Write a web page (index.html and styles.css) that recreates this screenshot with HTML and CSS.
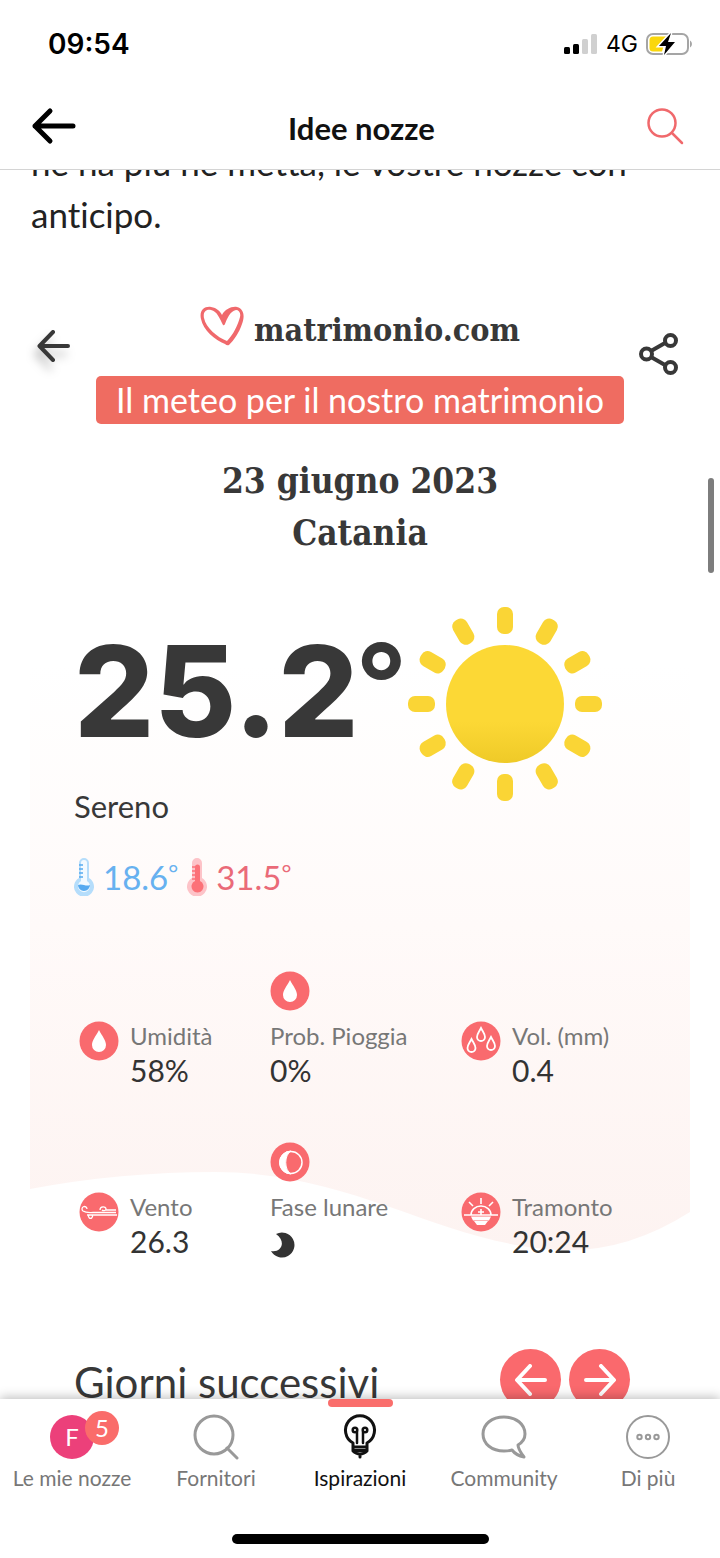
FILE: index.html
```html
<!DOCTYPE html>
<html lang="it">
<head>
    <meta charset="UTF-8">
    <meta name="viewport" content="width=device-width, initial-scale=1.0">
    <title>Idee nozze</title>
    <link rel="stylesheet" href="styles.css">
</head>
<body>
    <div class="app">
        <div class="status-bar">
            <span class="time">09:54</span>
            <div class="status-icons">
                <svg width="34" height="20" viewBox="0 0 34 20">
                    <rect x="0" y="13" width="6" height="7" rx="1.5" fill="#000"/>
                    <rect x="9" y="10" width="6" height="10" rx="1.5" fill="#000"/>
                    <rect x="18" y="5" width="6" height="15" rx="1.5" fill="#d0d0d0"/>
                    <rect x="27" y="0" width="6" height="20" rx="1.5" fill="#d0d0d0"/>
                </svg>
                <span class="network">4G</span>
                <svg width="46" height="24" viewBox="0 0 46 24">
                    <rect x="1" y="2" width="41" height="20" rx="6" fill="#fff" stroke="#a5a5a5" stroke-width="2"/>
                    <path d="M7 4.500h13l-5 8h3l-2 7H7a3.500 3.500 0 0 1-3.500-3.500V8A3.500 3.500 0 0 1 7 4.500z" fill="#fad70c"/>
                    <path d="M44 8.500c2.600 1.500 2.600 5.500 0 7z" fill="#a5a5a5"/>
                    <path d="M25 1 13 14h7l-2 9 11-13h-7z" fill="#000" stroke="#fff" stroke-width="3" paint-order="stroke"/>
                </svg>
            </div>
        </div>

        <header class="top-bar">
            <button class="icon-button" aria-label="Indietro">
                <svg width="46" height="38" viewBox="0 0 46 38" fill="none" stroke="#000" stroke-width="5" stroke-linecap="round" stroke-linejoin="round">
                    <path d="M42 19H4M19 4 4 19l15 15"/>
                </svg>
            </button>
            <h1>Idee nozze</h1>
            <button class="icon-button" aria-label="Cerca">
                <svg width="38" height="38" viewBox="0 0 38 38" fill="none" stroke="#f0696c" stroke-width="2.500" stroke-linecap="round">
                    <circle cx="16" cy="16" r="13.500"/>
                    <path d="m26 26 10 10"/>
                </svg>
            </button>
        </header>

        <main class="content">
            <p class="article-text">ne ha più ne metta, le vostre nozze con anticipo.</p>

            <section class="weather">
                <svg class="weather-bg" viewBox="0 0 660 650" preserveAspectRatio="none">
                    <defs>
                        <linearGradient id="blush" x1="0" y1="0" x2="0" y2="1">
                            <stop offset="0.100" stop-color="#fff"/>
                            <stop offset="0.500" stop-color="#fffaf9"/>
                            <stop offset="1" stop-color="#fdf3f1"/>
                        </linearGradient>
                    </defs>
                    <path d="M0 0H660V612Q600 650 540 650C420 650 330 572 185 572Q90 572 0 589z" fill="url(#blush)"/>
                </svg>

                <div class="brand-row">
                    <button class="icon-button back-small" aria-label="Indietro">
                        <svg width="34" height="32" viewBox="0 0 34 32" fill="none" stroke="#383838" stroke-width="4" stroke-linecap="round" stroke-linejoin="round">
                            <path d="M31 16H3M16 2 2.500 16 16 30"/>
                        </svg>
                    </button>
                    <div class="brand">
                        <svg width="44" height="40" viewBox="0 0 44 40">
                            <path fill="#f0696c" fill-rule="evenodd" d="M22 9C25 3 32 0 37 1C44 3 45 10 42 18C39 27 34 34 29 39Q27 40 25 38C15 34 3 24 1 13C-1 5 4 0 11 1C17 2 20 5 22 9zM23 19C20 13 17 5 11 4C5 3 3 7 4 12C6 22 17 31 27 35C33 29 38 19 40 11C41 7 39 4 36 4C30 5 27 13 25 18Q24 20 23 19z"/>
                        </svg>
                        <span class="brand-name">matrimonio.com</span>
                    </div>
                    <button class="icon-button share" aria-label="Condividi">
                        <svg width="40" height="44" viewBox="0 0 40 44" fill="none" stroke="#383838" stroke-width="4">
                            <path d="m12 19 14-8M12 25l14 8"/>
                            <circle cx="7.500" cy="22" r="5.500"/>
                            <circle cx="31.500" cy="8.500" r="5.500"/>
                            <circle cx="31.500" cy="35.500" r="5.500"/>
                        </svg>
                    </button>
                </div>

                <p class="banner">Il meteo per il nostro matrimonio</p>

                <h2 class="place">23 giugno 2023<br>Catania</h2>

                <div class="current">
                    <div>
                        <p class="temperature">25.2<span class="degree">°</span></p>
                        <p class="condition">Sereno</p>
                    </div>
                    <svg width="194" height="194" viewBox="-97 -97 194 194">
                        <defs>
                            <linearGradient id="sun" x1="0" y1="0" x2="0" y2="1">
                                <stop offset="0.650" stop-color="#fcd835"/>
                                <stop offset="1" stop-color="#efca28"/>
                            </linearGradient>
                            <rect id="ray" x="-8" y="-97" width="16" height="27" rx="7"/>
                        </defs>
                        <circle r="59" fill="url(#sun)"/>
                        <g fill="#fad535">
                            <use href="#ray"/>
                            <use href="#ray" transform="rotate(30)"/>
                            <use href="#ray" transform="rotate(60)"/>
                            <use href="#ray" transform="rotate(90)"/>
                            <use href="#ray" transform="rotate(120)"/>
                            <use href="#ray" transform="rotate(150)"/>
                            <use href="#ray" transform="rotate(180)"/>
                            <use href="#ray" transform="rotate(210)"/>
                            <use href="#ray" transform="rotate(240)"/>
                            <use href="#ray" transform="rotate(270)"/>
                            <use href="#ray" transform="rotate(300)"/>
                            <use href="#ray" transform="rotate(330)"/>
                        </g>
                    </svg>
                </div>

                <div class="extremes">
                    <svg width="20" height="38" viewBox="0 0 20 38">
                        <path d="M5 5a5 5 0 0 1 10 0v15a10 10 0 1 1-10 0z" fill="#b5ddfb"/>
                        <path d="M7 5a3 3 0 0 1 6 0v18a6 6 0 1 1-6 0z" fill="#f3faff"/>
                        <path d="M4 27c4-2 8 2 12 0a6 6 0 1 1-12 0z" fill="#57aaf0"/>
                        <path d="M5 7h4M5 11h4M5 15h4M5 19h4" stroke="#57aaf0" stroke-width="1.500"/>
                    </svg>
                    <span class="min">18.6<span class="degree">°</span></span>
                    <svg width="20" height="38" viewBox="0 0 20 38">
                        <path d="M5 5a5 5 0 0 1 10 0v15a10 10 0 1 1-10 0z" fill="#fdc3c8"/>
                        <path d="M8 9a2 2 0 0 1 5 0v14a6 6 0 1 1-5 0z" fill="#fc7178"/>
                        <path d="M5 9h4M5 13h4M5 17h4M5 21h4" stroke="#fc7178" stroke-width="1.500"/>
                    </svg>
                    <span class="max">31.5<span class="degree">°</span></span>
                </div>

                <div class="stats">
                    <div class="stat">
                        <svg width="40" height="40" viewBox="0 0 40 40">
                            <circle cx="20" cy="20" r="19.500" fill="#f96a6e"/>
                            <path d="M20 9c3 6 7 10 7 15a7 7 0 0 1-14 0c0-5 4-9 7-15z" fill="#fff"/>
                        </svg>
                        <div>
                            <p class="label">Umidità</p>
                            <p class="value">58%</p>
                        </div>
                    </div>
                    <div class="stat stacked">
                        <svg width="40" height="40" viewBox="0 0 40 40">
                            <circle cx="20" cy="20" r="19.500" fill="#f96a6e"/>
                            <path d="M20 9c3 6 7 10 7 15a7 7 0 0 1-14 0c0-5 4-9 7-15z" fill="#fff"/>
                        </svg>
                        <div>
                            <p class="label">Prob. Pioggia</p>
                            <p class="value">0%</p>
                        </div>
                    </div>
                    <div class="stat">
                        <svg width="40" height="40" viewBox="0 0 40 40">
                            <circle cx="20" cy="20" r="19.500" fill="#f96a6e"/>
                            <g fill="none" stroke="#fff" stroke-width="1.800">
                                <path d="M20 7c2 4 4 6 4 9a4 4 0 0 1-8 0c0-3 2-5 4-9z"/>
                                <path d="M10.500 18c2 4 4 6 4 9a4 4 0 0 1-8 0c0-3 2-5 4-9z"/>
                                <path d="M30 16c2 4 4 6 4 9a4 4 0 0 1-8 0c0-3 2-5 4-9z"/>
                            </g>
                        </svg>
                        <div>
                            <p class="label">Vol. (mm)</p>
                            <p class="value">0.4</p>
                        </div>
                    </div>
                    <div class="stat">
                        <svg width="40" height="40" viewBox="0 0 40 40">
                            <circle cx="20" cy="20" r="19.500" fill="#f96a6e"/>
                            <g fill="none" stroke="#fff" stroke-width="1.300">
                                <path d="M8 17a2.500 2.500 0 1 0-4 2c3 2 6 1.500 10 1.500h23"/>
                                <path d="M8 23h30M10 23a2 2 0 1 0 3 0"/>
                                <path d="M21 18c0-4 6-4 6-1 0 2-3 2-4 1M27 18h10"/>
                            </g>
                        </svg>
                        <div>
                            <p class="label">Vento</p>
                            <p class="value">26.3</p>
                        </div>
                    </div>
                    <div class="stat stacked">
                        <svg width="40" height="40" viewBox="0 0 40 40">
                            <circle cx="20" cy="20" r="19.500" fill="#f96a6e"/>
                            <circle cx="21" cy="20.500" r="11" fill="none" stroke="#fff" stroke-width="1.500"/>
                            <path d="M21 9a11.500 11.500 0 0 0 0 23c-7-4-7-19 0-23z" fill="#fff" stroke="#fff"/>
                        </svg>
                        <div>
                            <p class="label">Fase lunare</p>
                            <p class="value">
                                <svg class="moon" width="26" height="26" viewBox="0 0 26 26">
                                    <path d="M6 2A12.500 12.500 0 1 1 1 19C11 21 17 10 6 2z" fill="#333"/>
                                </svg>
                            </p>
                        </div>
                    </div>
                    <div class="stat">
                        <svg width="40" height="40" viewBox="0 0 40 40">
                            <circle cx="20" cy="20" r="19.500" fill="#f96a6e"/>
                            <g fill="none" stroke="#fff" stroke-width="1.600">
                                <path d="M3 23h34M10 23a10 9 0 0 1 20 0M20 6v6M8 10l4 4M32 10l-4 4M17 20h6M20 17v6"/>
                            </g>
                            <path d="M10 24.500h20l-2 4H12zM13 29h14l-3 4h-8z" fill="#fff"/>
                        </svg>
                        <div>
                            <p class="label">Tramonto</p>
                            <p class="value">20:24</p>
                        </div>
                    </div>
                </div>

                <div class="next-days">
                    <h3>Giorni successivi</h3>
                    <div class="arrows">
                        <button class="round-button" aria-label="Precedente">
                            <svg width="32" height="32" viewBox="0 0 32 32"><path d="M30 16H3M15 2 2 16l13 14"/></svg>
                        </button>
                        <button class="round-button" aria-label="Successivo">
                            <svg width="32" height="32" viewBox="0 0 32 32"><path d="M2 16h27M17 2l13 14-13 14"/></svg>
                        </button>
                    </div>
                </div>
            </section>
        </main>

        <div class="scroll-thumb"></div>

        <nav class="tab-bar">
            <div class="tabs">
                <a class="tab" href="#">
                    <span class="avatar">F<span class="badge">5</span></span>
                    Le mie nozze
                </a>
                <a class="tab" href="#">
                    <svg width="46" height="46" viewBox="0 0 46 46">
                        <circle cx="21" cy="21" r="19"/>
                        <path d="m34 34 10 10"/>
                    </svg>
                    Fornitori
                </a>
                <a class="tab active" href="#">
                    <svg width="46" height="46" viewBox="0 0 46 46">
                        <path d="M16 29a14.500 14.500 0 1 1 14 0v4H16zM16 33v4c2 2 4 3 7 3s5-1 7-3v-4M16 36.500h14M23 40v3"/>
                        <path stroke-width="2.500" d="M20 29V18M26 29V18"/>
                        <circle stroke-width="2.500" cx="18" cy="16" r="2.300"/>
                        <circle stroke-width="2.500" cx="28" cy="16" r="2.300"/>
                    </svg>
                    Ispirazioni
                </a>
                <a class="tab" href="#">
                    <svg width="46" height="46" viewBox="0 0 46 46">
                        <path d="M37 31C42 28 44 24 44 20C44 10 35 3 23 3S2 10 2 20s9 17 21 17c3 0 5 0 8-1 3 4 7 6 12 7-3-4-6-8-6-12z"/>
                    </svg>
                    Community
                </a>
                <a class="tab" href="#">
                    <svg class="thin" width="46" height="46" viewBox="0 0 46 46">
                        <circle cx="23" cy="23" r="21"/>
                        <circle cx="14.500" cy="23" r="2.200"/>
                        <circle cx="23" cy="23" r="2.200"/>
                        <circle cx="31.500" cy="23" r="2.200"/>
                    </svg>
                    Di più
                </a>
            </div>
            <div class="home-indicator"></div>
        </nav>
    </div>
</body>
</html>
```
FILE: styles.css
```css
* {
    box-sizing: border-box;
}
body {
    margin: 0;
    font-family: Lato, sans-serif;
    font-variant-ligatures: none;
    color: #383838;
    background: #fff;
}
h1, h2, h3, p {
    margin: 0;
    font-weight: 400;
}
svg {
    display: block;
    flex: none;
}
button {
    border: 0;
    padding: 0;
    background: none;
}
.app {
    position: relative;
    display: flex;
    flex-direction: column;
    height: 100vh;
    overflow: hidden;
}

/* Status bar */
.status-bar {
    display: flex;
    justify-content: space-between;
    align-items: center;
    height: 88px;
    padding: 0 28px 0 48px;
    color: #000;
}
.time {
    font: 600 28px Inter, sans-serif;
}
.status-icons {
    display: flex;
    align-items: center;
    gap: 8px;
}
.network {
    font: 400 23px Inter, sans-serif;
}

/* Title bar */
.top-bar {
    display: flex;
    justify-content: space-between;
    align-items: center;
    height: 82px;
    padding: 0 36px 6px 31px;
    border-bottom: 1px solid #d4d4d4;
}
.top-bar h1 {
    padding-top: 4px;
    font-size: 31px;
    font-weight: 700;
    color: #111;
}

.content {
    flex: 1;
    min-height: 0;
    overflow: hidden;
}
.article-text {
    margin-top: -34px;
    padding: 0 31px;
    font-size: 35px;
    line-height: 52px;
    color: #222;
}

/* Weather widget */
.weather {
    position: relative;
    padding-top: 66px;
}
.weather-bg {
    position: absolute;
    top: 360px;
    left: 30px;
    width: calc(100% - 60px);
    height: 650px;
}
.weather > div, .banner, .place {
    position: relative;
}
.brand-row {
    display: flex;
    justify-content: space-between;
    padding: 0 37px;
}
.brand-row .icon-button {
    width: 44px;
}
.brand {
    display: flex;
    gap: 10px;
    height: 70px;
}
.brand-name {
    font: 700 32px/48px "DejaVu Serif Condensed", "DejaVu Serif", serif;
}
.back-small {
    align-self: flex-start;
    padding-top: 24px;
    filter: drop-shadow(-3px 8px 5px rgba(0, 0, 0, 0.25));
}
.share {
    align-self: flex-end;
}
.banner {
    width: fit-content;
    margin: 0 auto;
    padding: 0 20px;
    border-radius: 5px;
    background: #ef6c61;
    color: #fff;
    font-size: 34px;
    line-height: 48px;
}
.place {
    margin-top: 31px;
    text-align: center;
    font: 700 35px/52px "DejaVu Serif Condensed", "DejaVu Serif", serif;
}
.current {
    display: grid;
    grid-template-columns: 334px auto;
    justify-content: start;
    align-items: start;
    margin-top: 48px;
    padding-left: 74px;
}
.temperature {
    display: flex;
    font: 800 126px/168px Inter, sans-serif;
    white-space: nowrap;
}
.temperature .degree {
    font: 900 110px/146px Lato, sans-serif;
}
.condition {
    margin-top: 14px;
    font-size: 31px;
    line-height: 34px;
}
.extremes {
    display: flex;
    align-items: center;
    gap: 9px;
    margin-top: 34px;
    padding-left: 74px;
    font-size: 33px;
    line-height: 40px;
}
.extremes .degree {
    font-size: 24px;
    vertical-align: 8px;
    line-height: 1;
}
.min {
    color: #67b1f0;
}
.max {
    color: #ea6a78;
}
.stats {
    display: grid;
    grid-template-columns: repeat(3, 1fr);
    align-items: end;
    row-gap: 55px;
    margin-top: 74px;
    padding: 0 68px 0 79px;
}
.stat {
    display: flex;
    align-items: center;
    gap: 11px;
    font-size: 24px;
    line-height: 34px;
    white-space: nowrap;
}
.stat > svg {
    margin-bottom: 24px;
}
.stacked {
    flex-direction: column;
    align-items: flex-start;
    gap: 8px;
}
.stacked > svg {
    margin-bottom: 0;
}
.label {
    color: #777;
}
.value {
    min-height: 34px;
    font-size: 30px;
    color: #333;
}
.moon {
    padding-top: 8px;
    box-sizing: border-box;
    height: 34px;
}
.next-days {
    display: flex;
    justify-content: space-between;
    align-items: center;
    margin-top: 91px;
    padding: 0 90px 0 74px;
}
.next-days h3 {
    padding-top: 4px;
    font-size: 42px;
    line-height: 48px;
}
.arrows {
    display: flex;
    gap: 8px;
}
.round-button {
    display: grid;
    place-items: center;
    width: 61px;
    height: 61px;
    border-radius: 50%;
    background: #fa696d;
}
.round-button path {
    fill: none;
    stroke: #fff;
    stroke-width: 4;
    stroke-linecap: round;
    stroke-linejoin: round;
}

.scroll-thumb {
    position: absolute;
    top: 478px;
    right: 6px;
    width: 6px;
    height: 95px;
    border-radius: 3px;
    background: #7d7d7d;
}

/* Bottom navigation */
.tab-bar {
    position: relative;
    height: 159px;
    background: #fff;
    box-shadow: 0 -2px 10px rgba(0, 0, 0, 0.25);
}
.tabs {
    display: grid;
    grid-template-columns: repeat(5, 1fr);
}
.tab {
    position: relative;
    display: flex;
    flex-direction: column;
    align-items: center;
    gap: 6px;
    padding-top: 15px;
    font-size: 21px;
    line-height: 24px;
    color: #777;
    text-decoration: none;
    white-space: nowrap;
}
.tab svg {
    fill: none;
    stroke: #999;
    stroke-width: 3;
    stroke-linecap: round;
    stroke-linejoin: round;
}
.tab .thin {
    stroke-width: 2;
}
.active {
    color: #111;
}
.tab.active svg {
    stroke: #111;
}
.active::before {
    content: '';
    position: absolute;
    top: 0;
    width: 65px;
    height: 8px;
    border-radius: 4px;
    background: #fa6e6c;
}
.avatar {
    position: relative;
    width: 44px;
    height: 44px;
    margin: 1px 0;
    border-radius: 50%;
    background: #ec407a;
    color: #fff;
    font-size: 24px;
    line-height: 44px;
    text-align: center;
}
.badge {
    position: absolute;
    top: -4px;
    left: 35px;
    width: 34px;
    height: 34px;
    border-radius: 50%;
    background: #fa6c6a;
    line-height: 34px;
}
.home-indicator {
    width: 257px;
    height: 10px;
    margin: 44px auto 0;
    border-radius: 5px;
    background: #000;
}
```
